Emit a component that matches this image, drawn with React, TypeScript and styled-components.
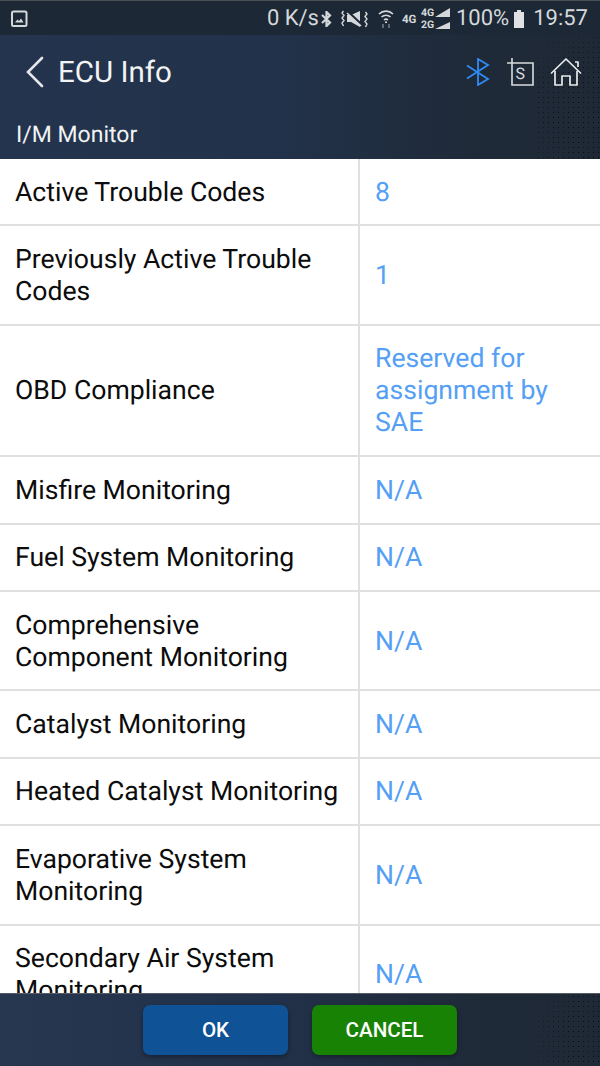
import type { ReactNode } from 'react'
import styled, { createGlobalStyle } from 'styled-components'

const GlobalStyle = createGlobalStyle`
  html, body {
    margin: 0;
    padding: 0;
    background: #fff;
  }
  * {
    box-sizing: border-box;
  }
`

const Screen = styled.div`
  width: 600px;
  height: 1066px;
  display: flex;
  flex-direction: column;
  overflow: hidden;
  font-family: Roboto, 'Liberation Sans', sans-serif;
  text-rendering: geometricPrecision;
`

const StatusBar = styled.div`
  height: 35px;
  flex: none;
  display: flex;
  align-items: center;
  padding: 2px 12px 0 11px;
  color: #d5d8da;
  background: #1c2836;
  border-top: 1px solid #4a4f54;
`

const StatusRight = styled.div`
  margin-left: auto;
  display: flex;
  align-items: center;
`

const StatusText = styled.span<{ $gap?: number }>`
  font-size: 22px;
  line-height: 32px;
  margin-left: ${(p) => p.$gap ?? 0}px;
`

const StatusIcon = styled.svg<{ $gap?: number }>`
  display: block;
  flex: none;
  margin-left: ${(p) => p.$gap ?? 0}px;
`

const Header = styled.header`
  position: relative;
  height: 124px;
  flex: none;
  display: flex;
  flex-direction: column;
  color: #f1f3f4;
  background: linear-gradient(90deg, #24344e 0%, #22324a 45%, #1f2a38 80%, #1f2936 100%);
`

const Dots = styled.div`
  position: absolute;
  top: 0;
  right: 0;
  bottom: 0;
  width: 64px;
  background-image: radial-gradient(circle, #0a0f16 0.6px, transparent 0.9px);
  background-size: 5px 5px;
  -webkit-mask-image: radial-gradient(circle at 100% 60%, #000 50%, transparent 95%);
  mask-image: radial-gradient(circle at 100% 60%, #000 50%, transparent 95%);
`

const TitleRow = styled.div`
  position: relative;
  display: flex;
  align-items: center;
  height: 73px;
  padding: 1px 18px 0 25px;
`

const BackIcon = styled.svg`
  display: block;
  margin-right: 14px;
`

const Title = styled.h1`
  margin: 2px 0 0;
  font-size: 29.5px;
  font-weight: 400;
  line-height: 34px;
`

const Actions = styled.div`
  margin-left: auto;
  display: flex;
  align-items: center;
  gap: 15px;
`

const BluetoothIcon = styled.svg`
  display: block;
  margin-right: 2px;
`

const SubTitle = styled.div`
  position: relative;
  padding-left: 16px;
  font-size: 23px;
  line-height: 30px;
  margin-top: 12px;
`

const Table = styled.div`
  flex: 1;
  min-height: 0;
  overflow: hidden;
  background: #fff;
`

const Row = styled.div`
  display: grid;
  grid-template-columns: 360px 1fr;
  border-bottom: 2px solid #e0e0e0;
`

const Label = styled.div<{ $lines: number }>`
  height: ${(p) => 33.4 + p.$lines * 32}px;
  padding: 2px 18px 0 15px;
  display: flex;
  align-items: center;
  font-size: 26.6px;
  line-height: 32px;
  color: #0c0c0c;
  border-right: 2px solid #e0e0e0;
`

const Value = styled.div`
  display: flex;
  align-items: center;
  padding: 2px 15px 0;
  font-size: 26.6px;
  line-height: 32px;
  color: #559ff5;
`

const Footer = styled.footer`
  position: relative;
  height: 73px;
  flex: none;
  display: flex;
  justify-content: center;
  gap: 24px;
  padding: 11px 0 0 0;
  border-top: 1px solid #555c64;
  background: linear-gradient(90deg, #26374f 0%, #22314a 45%, #1f2a38 80%, #1f2936 100%);
`

const FooterButton = styled.button<{ $bg: string }>`
  position: relative;
  width: 145px;
  height: 50px;
  border: 0;
  border-radius: 7px;
  padding: 0;
  font-family: inherit;
  font-size: 20.6px;
  font-weight: 500;
  color: #fff;
  background: ${(p) => p.$bg};
  box-shadow: 0 2px 4px rgba(0, 0, 0, 0.35);
`

const rows: { label: ReactNode; lines: number; value: ReactNode }[] = [
  { label: 'Active Trouble Codes', lines: 1, value: '8' },
  { label: 'Previously Active Trouble Codes', lines: 2, value: '1' },
  { label: 'OBD Compliance', lines: 3, value: 'Reserved for assignment by SAE' },
  { label: 'Misfire Monitoring', lines: 1, value: 'N/A' },
  { label: 'Fuel System Monitoring', lines: 1, value: 'N/A' },
  { label: 'Comprehensive Component Monitoring', lines: 2, value: 'N/A' },
  { label: 'Catalyst Monitoring', lines: 1, value: 'N/A' },
  { label: 'Heated Catalyst Monitoring', lines: 1, value: 'N/A' },
  { label: 'Evaporative System Monitoring', lines: 2, value: 'N/A' },
  { label: 'Secondary Air System Monitoring', lines: 2, value: 'N/A' },
]

const App = () => {
  return (
    <Screen>
      <GlobalStyle />
      <StatusBar>
        <svg width="17" height="18" viewBox="0 0 17 18" fill="none">
          <rect x="1" y="1.5" width="14.5" height="14.5" rx="1.5" stroke="#d5d8da" strokeWidth="2" />
          <path d="M4 12.5l2.5-3 1.5 1.5 2-2.5 2.5 4z" fill="#d5d8da" />
        </svg>
        <StatusRight>
          <StatusText>0 K/s</StatusText>
          <StatusIcon $gap={2} width="11" height="16" viewBox="0 0 11 16" fill="none" stroke="#d5d8da" strokeWidth="2.2">
            <path d="M1 4l8 7.5-3.5 3.5V1L9 4.5 1 12" />
          </StatusIcon>
          <StatusIcon $gap={9} width="27" height="18" viewBox="0 0 27 18" fill="none" stroke="#d5d8da">
            <path d="M2.5 1L1 3l2 2.5L1 8l2 2.5L1 13l1.5 3M24.5 2L26 4l-2 2.5L26 9l-2 2.5 2 2.5-1.5 3" strokeWidth="1.4" />
            <path d="M6 5h4l9-4v16l-9-5H6z" fill="#d5d8da" stroke="none" />
            <path d="M6 1l15 14" strokeWidth="2.4" stroke="#1c2836" />
            <path d="M6 3l14 13" strokeWidth="1.6" />
          </StatusIcon>
          <StatusIcon $gap={10} width="16" height="20" viewBox="0 0 16 20" fill="none" stroke="#d5d8da" strokeWidth="1.6">
            <path d="M1 5a10 10 0 0 1 14 0M3.5 8a6.5 6.5 0 0 1 9 0M6 11a3 3 0 0 1 4 0" />
            <path d="M8 12.5v1.5" strokeWidth="2" />
            <path d="M5 15v4M11 15v4" stroke="#7b8087" strokeWidth="1.5" />
          </StatusIcon>
          <StatusIcon $gap={8} width="15" height="12" viewBox="0 0 15 12">
            <text x="0" y="10" fontFamily="Roboto" fontSize="11.5" fontWeight="700" fill="#d5d8da">4G</text>
          </StatusIcon>
          <StatusIcon $gap={4} width="30" height="26" viewBox="0 0 30 26">
            <text x="0" y="10" fontFamily="Roboto" fontSize="10.5" fontWeight="700" fill="#d5d8da">4G</text>
            <text x="0" y="22" fontFamily="Roboto" fontSize="10.5" fontWeight="700" fill="#d5d8da">2G</text>
            <path d="M14 11L29 2v9zM14 23l15-7v7z" fill="#d5d8da" />
          </StatusIcon>
          <StatusText $gap={5}>100%</StatusText>
          <StatusIcon $gap={4} width="12" height="18" viewBox="0 0 12 18">
            <path d="M4 0h4v2h3v16H1V2h3z" fill="#dfe1e2" />
          </StatusIcon>
          <StatusText $gap={8}>19:57</StatusText>
        </StatusRight>
      </StatusBar>
      <Header>
        <Dots />
        <TitleRow>
          <BackIcon width="19" height="32" viewBox="0 0 19 32" fill="none" stroke="#e4e6e8" strokeWidth="2.6" strokeLinecap="round">
            <path d="M17 2L3 16l14 14" />
          </BackIcon>
          <Title>ECU Info</Title>
          <Actions>
            <BluetoothIcon width="24" height="28" viewBox="0 0 24 28" fill="none" stroke="#2f8bf5" strokeWidth="1.8">
              <path d="M1 7.5l21 13.5-10 6V1l10 6L1 20.5" />
            </BluetoothIcon>
            <svg width="28" height="29" viewBox="0 0 28 29" fill="none" stroke="#d9dcdf" strokeWidth="1.6">
              <path d="M0 5h26v22H5V0" />
              <text x="8.5" y="21" fontFamily="Roboto" fontSize="16" fill="#d9dcdf" stroke="none">S</text>
            </svg>
            <svg width="32" height="29" viewBox="0 0 32 29" fill="none" stroke="#e8eaec" strokeWidth="1.7" strokeLinejoin="round">
              <path d="M1 15.5L16 1l15 14.5" />
              <path d="M5 13v14h7v-9h8v9h7V13" />
              <path d="M25 4h3v5" />
            </svg>
          </Actions>
        </TitleRow>
        <SubTitle>I/M Monitor</SubTitle>
      </Header>
      <Table>
        {rows.map((row, i) => (
          <Row key={i}>
            <Label $lines={row.lines}>
              <span>{row.label}</span>
            </Label>
            <Value>
              <span>{row.value}</span>
            </Value>
          </Row>
        ))}
      </Table>
      <Footer>
        <Dots />
        <FooterButton $bg="#0f5295">OK</FooterButton>
        <FooterButton $bg="#188205">CANCEL</FooterButton>
      </Footer>
    </Screen>
  )
}

export default App
